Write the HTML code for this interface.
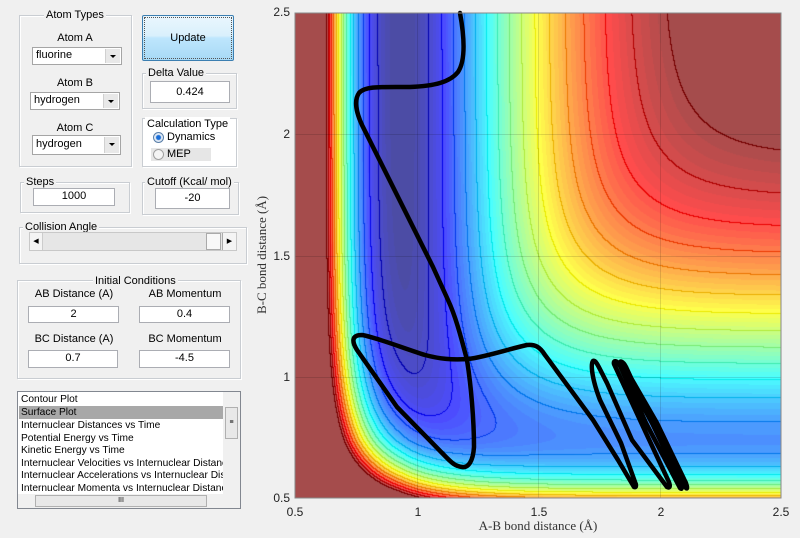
<!DOCTYPE html>
<html><head><meta charset="utf-8">
<style>
*{box-sizing:border-box;margin:0;padding:0}
body{width:800px;height:538px;background:#f0f0f0;position:relative;overflow:hidden;font-family:"Liberation Sans",sans-serif;font-size:11px;color:#000}
.a{position:absolute}
.pn{position:absolute;border:1px solid #c9cdd2;box-shadow:inset 1px 1px 0 #fff,1px 1px 0 #fff}
.tt{position:absolute;top:-8px;background:#f0f0f0;padding:0 2px;white-space:nowrap;line-height:14px}
.in{position:absolute;background:#fff;border:1px solid #abadb3;text-align:center;line-height:15px}
.sel{position:absolute;background:#fff;border:1px solid #a5a5a5;line-height:15px;padding-left:3px}
.sel:after{content:"";position:absolute;right:1px;top:1px;bottom:1px;width:14px;background:#e8e8e8;border-left:1px solid #d0d0d0}
.sel i{position:absolute;right:5px;top:7px;width:0;height:0;border-left:3px solid transparent;border-right:3px solid transparent;border-top:3px solid #000;z-index:2}
.lb{position:absolute;text-align:center;line-height:13px}
.li{position:absolute;left:1px;width:205px;height:13px;line-height:13px;padding-left:2px;white-space:nowrap;overflow:hidden;font-size:10.2px}
.tk{position:absolute;font-size:12px;color:#222;line-height:13px}
</style></head><body>

<div class="pn" style="left:19px;top:15px;width:113px;height:152px"><div class="tt" style="left:24px">Atom Types</div></div>
<div class="lb" style="left:45px;top:32px;width:60px">Atom A</div>
<div class="sel" style="left:32px;top:47px;width:90px;height:18px">fluorine<i></i></div>
<div class="lb" style="left:45px;top:77px;width:60px">Atom B</div>
<div class="sel" style="left:30px;top:92px;width:90px;height:18px">hydrogen<i></i></div>
<div class="lb" style="left:45px;top:122px;width:60px">Atom C</div>
<div class="sel" style="left:32px;top:135px;width:89px;height:20px;line-height:17px">hydrogen<i></i></div>

<div class="a" style="left:142px;top:15px;width:92px;height:46px;border:1px solid #3c7fb1;border-radius:2px;background:linear-gradient(#eaf6fd 0%,#d9f0fc 45%,#bee6fd 50%,#a7d9f5 100%);outline:1px dotted #555;outline-offset:-3px;text-align:center;line-height:44px">Update</div>

<div class="pn" style="left:142px;top:73px;width:95px;height:36px"><div class="tt" style="left:3px">Delta Value</div></div>
<div class="in" style="left:150px;top:81px;width:80px;height:22px;line-height:20px">0.424</div>

<div class="pn" style="left:142px;top:118px;width:95px;height:49px;background:#fff"><div class="tt" style="left:2px;background:#fff;top:-2px">Calculation Type</div></div>
<div class="a" style="left:151px;top:148px;width:60px;height:13px;background:#e6e6e6"></div>
<div class="a" style="left:153px;top:132px;width:11px;height:11px;border-radius:50%;border:1px solid #5a7fa8;background:radial-gradient(#1a6ed8 0 2px,#dfe9f5 3px)"></div>
<div class="a" style="left:167px;top:131px">Dynamics</div>
<div class="a" style="left:153px;top:149px;width:11px;height:11px;border-radius:50%;border:1px solid #a0a0a0;background:#f4f4f4"></div>
<div class="a" style="left:167px;top:148px">MEP</div>

<div class="pn" style="left:20px;top:182px;width:110px;height:31px"><div class="tt" style="left:3px">Steps</div></div>
<div class="in" style="left:33px;top:188px;width:82px;height:18px">1000</div>
<div class="pn" style="left:142px;top:182px;width:97px;height:33px"><div class="tt" style="left:2px">Cutoff (Kcal/ mol)</div></div>
<div class="in" style="left:155px;top:188px;width:75px;height:21px;line-height:19px">-20</div>

<div class="pn" style="left:19px;top:227px;width:228px;height:37px"><div class="tt" style="left:3px">Collision Angle</div></div>
<div class="a" style="left:29px;top:232px;width:208px;height:19px;background:#e6e6e6;border:1px solid #c8c8c8"></div>
<div class="a" style="left:30px;top:233px;width:13px;height:17px;background:#f4f4f4;border-right:1px solid #ccc;font-size:7px;line-height:17px;text-align:center">◀</div>
<div class="a" style="left:206px;top:233px;width:15px;height:17px;background:#f8f8f8;border:1px solid #aaa"></div>
<div class="a" style="left:222px;top:233px;width:14px;height:17px;background:#f4f4f4;border-left:1px solid #aaa;font-size:7px;line-height:17px;text-align:center">▶</div>

<div class="pn" style="left:17px;top:280px;width:224px;height:99px"><div class="tt" style="left:75px;top:-7px">Initial Conditions</div></div>
<div class="lb" style="left:28px;top:288px;width:92px">AB Distance (A)</div>
<div class="lb" style="left:139px;top:288px;width:92px">AB Momentum</div>
<div class="in" style="left:28px;top:306px;width:91px;height:17px">2</div>
<div class="in" style="left:139px;top:306px;width:91px;height:17px">0.4</div>
<div class="lb" style="left:28px;top:333px;width:92px">BC Distance (A)</div>
<div class="lb" style="left:139px;top:333px;width:92px">BC Momentum</div>
<div class="in" style="left:28px;top:350px;width:90px;height:18px">0.7</div>
<div class="in" style="left:139px;top:350px;width:91px;height:18px">-4.5</div>

<div class="a" style="left:17px;top:391px;width:224px;height:118px;background:#fff;border:1px solid #828790;overflow:hidden">
<div class="li" style="top:1px">Contour Plot</div>
<div class="li" style="top:14px;background:#a8a8a8">Surface Plot</div>
<div class="li" style="top:27px">Internuclear Distances vs Time</div>
<div class="li" style="top:40px">Potential Energy vs Time</div>
<div class="li" style="top:52px">Kinetic Energy vs Time</div>
<div class="li" style="top:65px">Internuclear Velocities vs Internuclear Distance</div>
<div class="li" style="top:77px">Internuclear Accelerations vs Internuclear Distance</div>
<div class="li" style="top:90px">Internuclear Momenta vs Internuclear Distance</div>
<div class="a" style="left:205px;top:0;width:17px;height:102px;background:#f0f0f0"></div>
<div class="a" style="left:207px;top:15px;width:13px;height:32px;background:#e8e8e8;border:1px solid #b0b0b0;text-align:center;font-size:7px;line-height:30px">≡</div>
<div class="a" style="left:0;top:102px;width:222px;height:14px;background:#f0f0f0"></div>
<div class="a" style="left:17px;top:103px;width:172px;height:12px;background:#e8e8e8;border:1px solid #b0b0b0;text-align:center;font-size:7px;line-height:10px">III</div>
</div>

<canvas id="c" width="486" height="485" class="a" style="left:295px;top:13px"></canvas>
<svg class="a" style="left:0;top:0" width="800" height="538">
<g stroke="#000" stroke-opacity="0.13" stroke-width="1">
<line x1="417.5" y1="13" x2="417.5" y2="498"/><line x1="538.5" y1="13" x2="538.5" y2="498"/><line x1="660.5" y1="13" x2="660.5" y2="498"/>
<line x1="295" y1="377.5" x2="781" y2="377.5"/><line x1="295" y1="134.5" x2="781" y2="134.5"/><line x1="295" y1="256.5" x2="781" y2="256.5"/>
</g>
<path fill="none" stroke="#000" stroke-width="4.5" stroke-linejoin="round" stroke-linecap="round" d="M460,13 C464,35 466,60 458,72 C450,82 435,86 410,87 C380,87 365,86 359,93 C354,100 356,112 362,125 L403,207 L433,267 L448,300 C455,315 460,333 467,360 C471,385 474,420 474,447 C473,462 468,468 462,467 C455,466 452,463 446,457 L397,407 L357,350 C352,342 351,335 362,335 C375,337 400,347 425,355 C440,359 452,360 468,359 C485,357 505,350 527,345 C535,344 540,347 545,355 L593,420 L618,460 L634,487 C637,488 636,484 635,482 L621,443 L600,400 C593,382 590,365 593,361 C596,359 600,370 607,383 L632,440 L667,487 C671,489 670,484 668,480 L646,433 L614,364 C613,360 617,360 620,366 L646,423 L680,488 C683,491 682,484 679,479 L652,423 L620,364 C619,360 623,361 626,367 L652,423 L686,488 C688,490 687,484 684,479 L657,423 L623,364"/>
<rect x="295" y="13" width="486" height="485" fill="none" stroke="#888" stroke-width="1"/>
</svg>
<div class="tk" style="left:268px;top:6px;width:22px;text-align:right">2.5</div>
<div class="tk" style="left:268px;top:128px;width:22px;text-align:right">2</div>
<div class="tk" style="left:268px;top:250px;width:22px;text-align:right">1.5</div>
<div class="tk" style="left:268px;top:371px;width:22px;text-align:right">1</div>
<div class="tk" style="left:268px;top:492px;width:22px;text-align:right">0.5</div>
<div class="tk" style="left:280px;top:506px;width:30px;text-align:center">0.5</div>
<div class="tk" style="left:403px;top:506px;width:30px;text-align:center">1</div>
<div class="tk" style="left:524px;top:506px;width:30px;text-align:center">1.5</div>
<div class="tk" style="left:646px;top:506px;width:30px;text-align:center">2</div>
<div class="tk" style="left:766px;top:506px;width:30px;text-align:center">2.5</div>
<div class="a" style="left:438px;top:518px;width:200px;text-align:center;font-family:'Liberation Serif',serif;font-size:13px;color:#333">A-B bond distance (Å)</div>
<div class="a" style="left:162px;top:247px;width:200px;text-align:center;font-family:'Liberation Serif',serif;font-size:13px;color:#333;transform:rotate(-90deg)">B-C bond distance (Å)</div>

<script>
(function(){
var cv=document.getElementById('c'),ctx=cv.getContext('2d'),W=486,H=485;
var img=ctx.createImageData(W,H),d=img.data;
var D1=136,r1=0.94,aL1=2.1,aR1=2.4,D2=109,r2=0.74,aL2=2.3,aR2=2.0,Vmin=-136,Vc=-20,step=116/16;
function V(x,y){var u1=x-r1,u2=y-r2;var e1=Math.exp(-(u1<0?aL1:aR1)*u1),e2=Math.exp(-(u2<0?aL2:aR2)*u2);
var Ar=D1*e1*e1,Aa=2*D1*e1,Br=D2*e2*e2,Bb=2*D2*e2;return Ar+Br-Math.sqrt(Aa*Aa+Bb*Bb);}
function cl(v){return v<0?0:v>1?1:v;}
function jet(t){return [cl(1.5-Math.abs(4*t-3)),cl(1.5-Math.abs(4*t-2)),cl(1.5-Math.abs(4*t-1))];}
var vals=new Float32Array(W*H);
for(var j=0;j<H;j++)for(var i=0;i<W;i++){vals[j*W+i]=V(0.5+i/243,2.5-j/242.5);}
function band(v){if(v>=Vc)return 999;return Math.floor((v-Vmin)/step);}
for(var j=0;j<H;j++)for(var i=0;i<W;i++){
var v=vals[j*W+i],t,c,p=(j*W+i)*4,line=false;
var b=band(v);
if(i<W-1&&band(vals[j*W+i+1])!=b)line=true;
if(j<H-1&&band(vals[(j+1)*W+i])!=b)line=true;
if(v>=Vc){t=1;}else{var q=Math.floor((v-Vmin)/(step/4))*(step/4);t=cl(q/(Vc-Vmin));}
c=jet(t);
var r,g,bl;
if(line){var lt=cl((v-Vmin)/(Vc-Vmin));var lc=jet(lt);r=lc[0]*255*0.92;g=lc[1]*255*0.92;bl=lc[2]*255*0.92;}
else{r=c[0]*255*0.7+76;g=c[1]*255*0.7+76;bl=c[2]*255*0.7+76;}
d[p]=r;d[p+1]=g;d[p+2]=bl;d[p+3]=255;}
ctx.putImageData(img,0,0);
})();
</script>
</body></html>
